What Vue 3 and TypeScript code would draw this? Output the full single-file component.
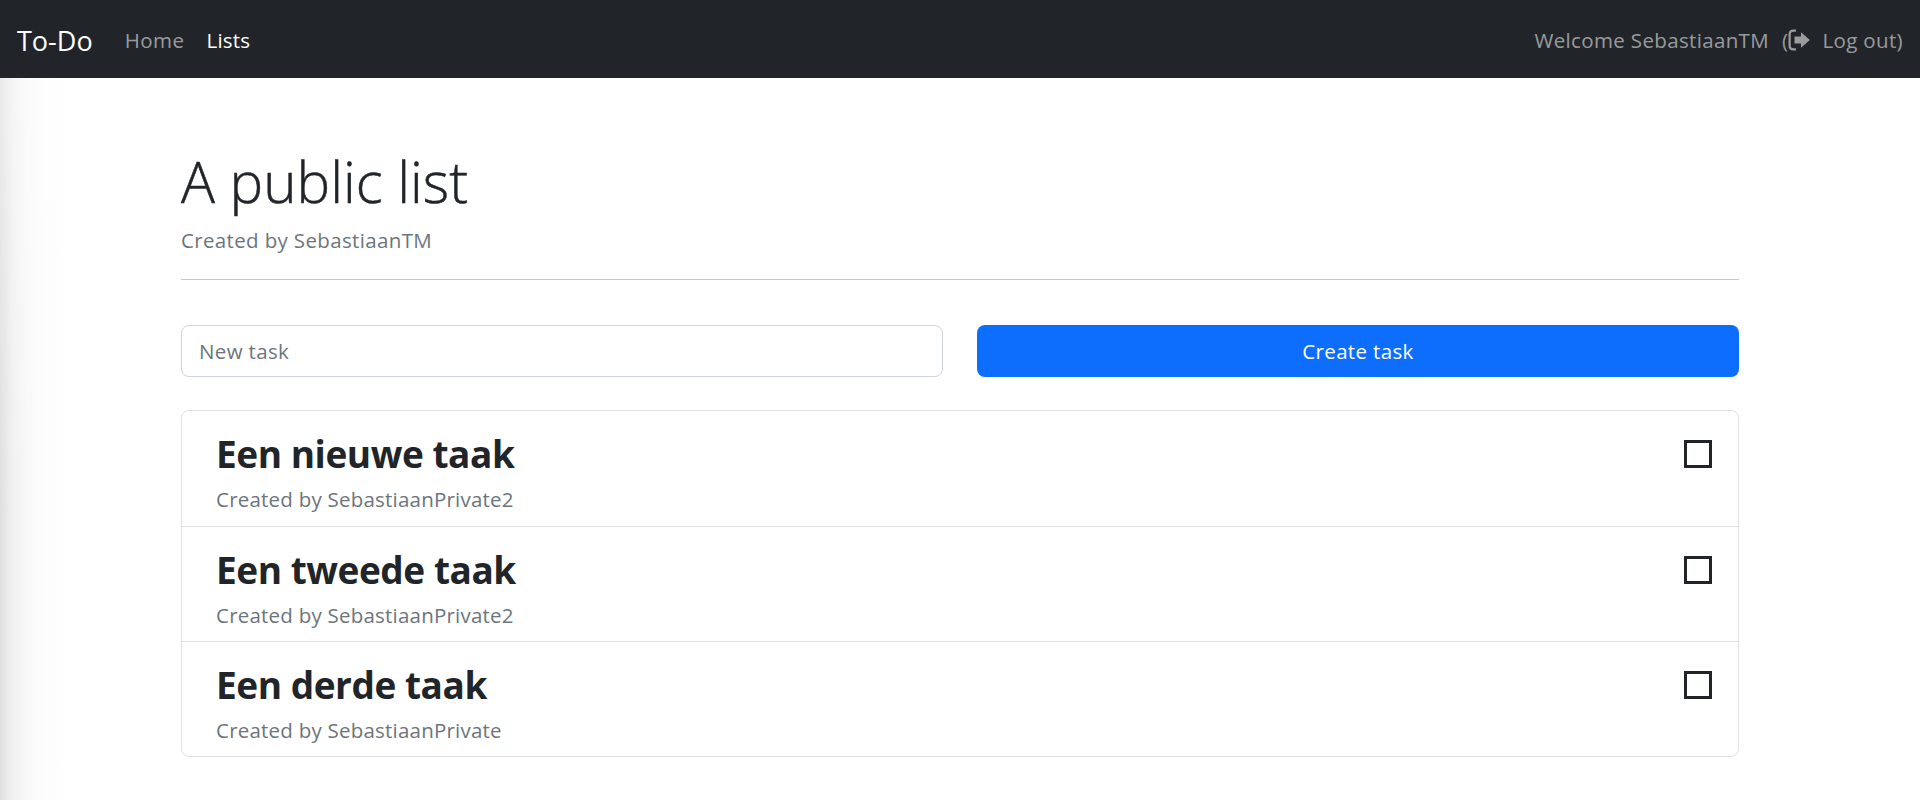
<script setup lang="ts">
interface Task {
  title: string
  author: string
}
const tasks: Task[] = [
  { title: 'Een nieuwe taak', author: 'SebastiaanPrivate2' },
  { title: 'Een tweede taak', author: 'SebastiaanPrivate2' },
  { title: 'Een derde taak', author: 'SebastiaanPrivate' },
]
</script>

<template>
  <div class="page">
    <nav class="navbar">
      <span class="brand">To-Do</span>
      <a class="nav-link">Home</a>
      <a class="nav-link active">Lists</a>
      <span class="user">
        <span>Welcome SebastiaanTM</span>
        <span class="logout">(<svg class="logout-icon" viewBox="0 0 22 22" aria-hidden="true"><path fill="none" stroke="currentColor" stroke-width="2.2" d="M8 1.6H5.5C3.2 1.6 1.6 3.2 1.6 5.5v11c0 2.3 1.6 3.9 3.9 3.9H8"/><path fill="currentColor" d="M6.5 7.6h6.5V3.2L21.8 11 13 18.8v-4.4H6.5z"/></svg><span class="logout-text">Log out)</span></span>
      </span>
    </nav>
    <div class="shade"></div>
    <main class="container">
      <h1 class="title">A public list</h1>
      <p class="sub">Created by SebastiaanTM</p>
      <hr class="rule" />
      <div class="form-row">
        <input class="input" type="text" placeholder="New task" />
        <button class="btn" type="button">Create task</button>
      </div>
      <ul class="list">
        <li v-for="task in tasks" :key="task.title" class="item">
          <div class="item-text">
            <h2 class="item-title">{{ task.title }}</h2>
            <span class="item-sub">Created by {{ task.author }}</span>
          </div>
          <span class="check"></span>
        </li>
      </ul>
    </main>
  </div>
</template>

<style>
html, body { margin: 0; background: #fff; }
</style>

<style scoped>
.page {
  position: relative;
  height: 800px;
  overflow: hidden;
  font-family: "Open Sans", "Noto Sans", sans-serif;
  font-size: 20.5px;
  letter-spacing: 0.35px;
  color: #212529;
}
.navbar {
  height: 78px;
  box-sizing: border-box;
  background: #212529;
  display: flex;
  align-items: center;
  padding: 2px 17px 0;
}
.brand { font-size: 27px; letter-spacing: 0; color: #fff; margin-right: 32px; }
.nav-link { color: rgba(255,255,255,.55); margin-right: 22px; letter-spacing: 0.5px; }
.nav-link.active { color: #fff; letter-spacing: 0.2px; }
.user {
  margin-left: auto;
  display: flex;
  gap: 13px;
  color: rgba(255,255,255,.55);
}
.logout { display: inline-flex; align-items: center; }
.logout-icon { width: 22px; height: 22px; margin: 0 0 1px 0; }
.logout-text { margin-left: 12px; }
.shade {
  position: absolute;
  left: 0;
  top: 78px;
  bottom: 0;
  width: 70px;
  background:
    linear-gradient(180deg, rgba(255,255,255,.35), rgba(255,255,255,0) 60%),
    linear-gradient(90deg, #dfdfdf, #f0f0f0 18%, #f9f9f9 40%, #fdfdfd 65%, #fff);
}
.container {
  position: relative;
  width: 1558px;
  margin-left: 181px;
  padding-top: 66px;
}
.title {
  margin: 0;
  font-size: 56.5px;
  font-weight: 300;
  letter-spacing: 0;
  line-height: 76px;
  -webkit-text-stroke: 0.5px #212529;
}
.sub { margin: 6px 0 0; color: #6c757d; line-height: 28px; }
.rule {
  margin: 25px 0 0;
  border: 0;
  border-top: 1px solid #c8c9ca;
}
.form-row {
  display: grid;
  grid-template-columns: 1fr 1fr;
  gap: 34px;
  margin-top: 45px;
}
.input {
  height: 52px;
  box-sizing: border-box;
  border: 1px solid #ced4da;
  border-radius: 8px;
  padding: 0 17px;
  font: inherit;
  letter-spacing: inherit;
  outline: none;
}
.input::placeholder { color: #6c757d; opacity: 1; }
.btn {
  height: 52px;
  border: 0;
  border-radius: 8px;
  background: #0d6efd;
  color: #fff;
  font: inherit;
  letter-spacing: inherit;
}
.list {
  list-style: none;
  margin: 33px 0 0;
  padding: 0;
  border: 1px solid #dfe0e1;
  border-radius: 8px;
}
.item {
  height: 115px;
  box-sizing: border-box;
  display: flex;
  justify-content: space-between;
  align-items: flex-start;
  padding: 18px 26px 0 34px;
  border-top: 1px solid #dfe0e1;
}
.item:first-child { border-top: 0; }
.item-text { display: flex; flex-direction: column; }
.item-title { margin: 0; font-size: 37px; font-weight: 700; letter-spacing: -0.45px; line-height: 50px; }
.item-sub { color: #6c757d; line-height: 28px; margin-top: 6px; letter-spacing: 0.22px; }
.check {
  width: 28px;
  height: 28px;
  box-sizing: border-box;
  border: 3px solid #212529;
  margin-top: 11px;
}
</style>
